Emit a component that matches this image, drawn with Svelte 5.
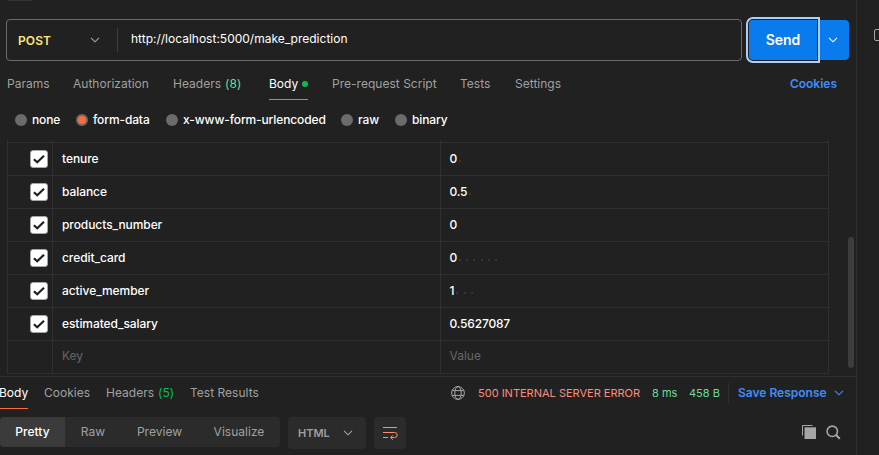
<script>
  const requestTabs = [
    { label: 'Params', w: 66 },
    { label: 'Authorization', w: 100 },
    { label: 'Headers', count: '(8)', w: 96 },
    { label: 'Body', dot: true, w: 63, active: true },
    { label: 'Pre-request Script', w: 128 },
    { label: 'Tests', w: 55 },
    { label: 'Settings', w: 60 }
  ];
  const modes = [
    { label: 'none', w: 61 },
    { label: 'form-data', w: 90, on: true },
    { label: 'x-www-form-urlencoded', w: 175 },
    { label: 'raw', w: 54 },
    { label: 'binary', w: 60 }
  ];
  const rows = [
    { key: 'tenure', value: '0', spaces: 1 },
    { key: 'balance', value: '0.5', spaces: 1 },
    { key: 'products_number', value: '0', spaces: 0 },
    { key: 'credit_card', value: '0', spaces: 6 },
    { key: 'active_member', value: '1', spaces: 3 },
    { key: 'estimated_salary', value: '0.5627087', spaces: 0 }
  ];
  const responseTabs = [
    { label: 'Body', w: 45, active: true },
    { label: 'Cookies', w: 62 },
    { label: 'Headers', count: '(5)', w: 84 },
    { label: 'Test Results', w: 80 }
  ];
  const views = [
    { label: 'Pretty', w: 65, active: true },
    { label: 'Raw', w: 56 },
    { label: 'Preview', w: 77 },
    { label: 'Visualize', w: 82 }
  ];
</script>

{#snippet chevron()}
  <svg class="chevron" width="10" height="6" viewBox="0 0 10 6"><path d="M1 .9 5 4.8 9 .9" fill="none" stroke="currentColor" stroke-width="1.1" /></svg>
{/snippet}

<div class="app">
  <main>
    <div class="stub"></div>
    <div class="request">
      <div class="urlbox">
        <div class="method"><span>POST</span>{@render chevron()}</div>
        <div class="url">http://localhost:5000/make_prediction</div>
      </div>
      <div class="send-group">
        <button class="send">Send</button>
        <button class="more">{@render chevron()}</button>
      </div>
    </div>

    <nav class="tabs">
      {#each requestTabs as t}
        <div class="slot" style:width="{t.w}px">
          <span class="tab" class:active={t.active}>{t.label}{#if t.count}<b class="count light">{t.count}</b>{/if}{#if t.dot}<i class="dot"></i>{/if}</span>
        </div>
      {/each}
      <a class="cookies" href="#cookies">Cookies</a>
    </nav>

    <div class="modes">
      {#each modes as m}
        <label class="mode" style:width="{m.w}px"><i class="radio" class:on={m.on}></i><span>{m.label}</span></label>
      {/each}
    </div>

    <section class="body">
      <div class="table">
        <div class="row head"><div class="c1"></div><div class="c2"></div><div class="c3"></div></div>
        {#each rows as r}
          <div class="row">
            <div class="c1">
              <span class="check"><svg width="16" height="16" viewBox="0 0 16 16"><path d="M2.9 8.2 6.2 11.3 13 4.7" fill="none" stroke="#212121" stroke-width="2.2" /></svg></span>
            </div>
            <div class="c2">{r.key}</div>
            <div class="c3">{r.value}{#if r.spaces}<span class="ws">{#each Array(r.spaces) as _}<i></i>{/each}</span>{/if}</div>
          </div>
        {/each}
        <div class="row placeholder"><div class="c1"></div><div class="c2">Key</div><div class="c3">Value</div></div>
      </div>
      <div class="scroll"></div>
    </section>

    <section class="response">
      <div class="rbar">
        {#each responseTabs as t}
          <div class="slot" style:width="{t.w}px">
            <span class="tab" class:active={t.active}>{t.label}{#if t.count}<b class="count">{t.count}</b>{/if}</span>
          </div>
        {/each}
        <div class="status">
          <svg class="globe" width="14" height="14" viewBox="0 0 14 14" fill="none" stroke="#a6a6a6" stroke-width="1">
            <circle cx="7" cy="7" r="6.4" /><ellipse cx="7" cy="7" rx="3.2" ry="6.4" /><path d="M1.2 4.6h11.6M1.2 9.4h11.6" />
          </svg>
          <span class="code">500 INTERNAL SERVER ERROR</span>
          <span class="time">8 ms</span>
          <span class="size">458 B</span>
          <span class="save">Save Response</span>
          <span class="savechev">{@render chevron()}</span>
        </div>
      </div>
      <div class="viewbar">
        <div class="views">
          {#each views as v}
            <div class="view" class:active={v.active} style:width="{v.w}px">{v.label}</div>
          {/each}
        </div>
        <div class="lang"><span>HTML</span>{@render chevron()}</div>
        <div class="wrap">
          <svg width="16" height="16" viewBox="0 0 16 16" fill="none" stroke="#ff8e64" stroke-width="1"><path d="M1 2.500h14M1 7.500h11.700a2.250 2.250 0 0 1 0 5H8.800M1 12.500h5M10.800 10.300 8.600 12.500 10.800 14.700" /></svg>
        </div>
        <div class="tools">
          <svg width="14" height="14" viewBox="0 0 14 14"><path d="M.5 10.5V.5h10" fill="none" stroke="#a6a6a6" /><path d="M2.500 2.300H14V14H2.500z" fill="#a6a6a6" /></svg>
          <svg width="15" height="15" viewBox="0 0 15 15" fill="none" stroke="#a6a6a6"><circle cx="6.3" cy="6.3" r="5.2" stroke-width="1.6" /><path d="m10 10 3.800 3.800" stroke-width="2" /></svg>
        </div>
      </div>
    </section>
  </main>
  <aside><svg width="5" height="12" viewBox="0 0 5 12"><path d="M6 .5H2Q.5 .5 .5 2v8q0 1.500 1.500 1.500h4" fill="none" stroke="#a6a6a6" /></svg></aside>
</div>

<style>
  :global(body) { margin: 0; background: #212121; }
  .app, .app * { box-sizing: border-box; }
  .app {
    display: flex; width: 879px; height: 455px; overflow: hidden;
    background: #212121; color: #a0a0a0;
    font: 400 12px/16px Inter, "Liberation Sans", sans-serif;
    letter-spacing: .02px; white-space: nowrap;
  }
  main { width: 857px; border-right: 1px solid #303030; display: flex; flex-direction: column; }
  aside { flex: 1; padding: 29px 0 0 17px; overflow: hidden; }
  svg { display: block; flex: none; }
  button { border: 0; margin: 0; padding: 0; font: inherit; letter-spacing: 0; color: #fff; background: #097bed; }
  .stub { width: 24px; height: 1px; margin-left: 8px; background: #333; flex: none; }

  .request { display: flex; height: 42px; margin: 18px 0 0 6px; flex: none; }
  .urlbox { width: 736px; border: 1px solid #6b6b6b; border-radius: 4px; display: flex; align-items: center; }
  .method { width: 111px; height: 24px; padding: 0 17px 0 11px; border-right: 1px solid #3d3d3d; display: flex; align-items: center; justify-content: space-between; color: #ffe47e; font-weight: 600; letter-spacing: .1px; }
  .method span { padding-top: 2px; }
  .method .chevron { color: #a6a6a6; }
  .url { padding-left: 13px; margin-top: -2px; color: #fff; letter-spacing: 0; }
  .send-group { display: flex; margin: 1px 0 1px 7px; }
  .send { width: 68px; height: 40px; font-size: 14px; font-weight: 600; border-radius: 4px 0 0 4px; outline: 2px solid #aecdf9; outline-offset: 1px; z-index: 1; box-shadow: 0 0 0 1px #212121; }
  .more { width: 32px; display: grid; place-items: center; border-radius: 0 4px 4px 0; }

  .tabs { display: flex; height: 39px; padding: 7px 19px 0 7px; flex: none; }
  .slot { flex: none; }
  .tab { display: inline-flex; align-items: center; height: 32px; border-bottom: 1px solid transparent; }
  .tab.active { color: #fff; border-color: #ff6c37; }
  .count { font-weight: 400; color: #0cbb52; margin-left: 4px; }
  .count.light { color: #6bdd9a; }
  .dot { width: 6px; height: 6px; border-radius: 50%; background: #0cbb52; margin-left: 4px; }
  .cookies { margin: 8px 0 0 auto; color: #3f8efa; font-weight: 600; letter-spacing: 0; text-decoration: none; }

  .modes { display: flex; align-items: center; height: 40px; padding-left: 15px; flex: none; color: #fff; font-weight: 500; letter-spacing: -.12px; }
  .mode { display: flex; align-items: center; gap: 5px; }
  .radio { width: 12px; height: 12px; border-radius: 50%; background: #6b6b6b; flex: none; }
  .radio.on { background: #ff6c37; border: 2.5px solid #6b6b6b; }

  .body { display: flex; height: 236px; flex: none; }
  .table { width: 822px; margin-left: 7px; height: 234px; border-right: 1px solid #303030; border-left: 1px solid #303030; letter-spacing: -.07px; }
  .row { display: flex; height: 33px; border-bottom: 1px solid #303030; color: #fff; font-weight: 500; }
  .row.head { height: 3px; }
  .row > div { display: flex; align-items: center; }
  .c1 { width: 45px; padding-left: 22px; border-right: 1px solid #303030; }
  .c2 { width: 388px; padding-left: 9px; border-right: 1px solid #303030; }
  .c3 { padding-left: 8.5px; letter-spacing: -.18px; }
  .row.placeholder { color: #666; font-weight: 400; }
  .placeholder .c2, .placeholder .c3 { padding-bottom: 2px; letter-spacing: 0; }
  .check { width: 18px; height: 18px; border: 1px solid #a6a6a6; border-radius: 3px; background: #fff; }
  .ws { display: flex; gap: 5.2px; margin-left: 2px; padding-top: 3px; }
  .ws i { width: 2px; height: 2px; background: #353535; }
  .scroll { width: 6px; height: 131px; margin: 97px 0 0 19px; border-radius: 3px; background: #3d3d3d; }

  .response { border-top: 1px solid #303030; flex: 1; }
  .rbar { display: flex; height: 40px; }
  .rbar .slot:first-child { margin-left: -1px; }
  .status { display: flex; margin-left: 181px; height: 32px; align-items: center; font-size: 11px; letter-spacing: 0; }
  .code { width: 174px; margin-left: 13px; color: #ff8c7c; }
  .time { width: 37px; color: #6bdd9a; }
  .size { width: 39px; color: #6bdd9a; }
  .save { width: 87px; height: 20px; padding-left: 9px; border-left: 1px solid #303030; box-sizing: content-box; line-height: 20px; color: #3f8efa; font-size: 12px; font-weight: 600; }
  .savechev { color: #3f8efa; margin-left: 9px; }
  .viewbar { display: flex; align-items: flex-start; }
  .views { display: flex; border-radius: 4px; overflow: hidden; background: #2b2b2b; }
  .view { height: 30px; line-height: 30px; text-align: center; }
  .view.active { background: #3b3b3b; color: #fff; font-weight: 500; }
  .lang { width: 78px; height: 32px; margin-left: 8px; padding: 0 13px 0 10px; border-radius: 4px; background: #2b2b2b; display: flex; align-items: center; justify-content: space-between; font-size: 11px; font-weight: 600; letter-spacing: 0; }
  .wrap { width: 32px; height: 32px; margin-left: 8px; border-radius: 4px; background: #2b2b2b; display: grid; place-items: center; }
  .tools { display: flex; gap: 10px; margin: 8px 15px 0 auto; }
</style>
